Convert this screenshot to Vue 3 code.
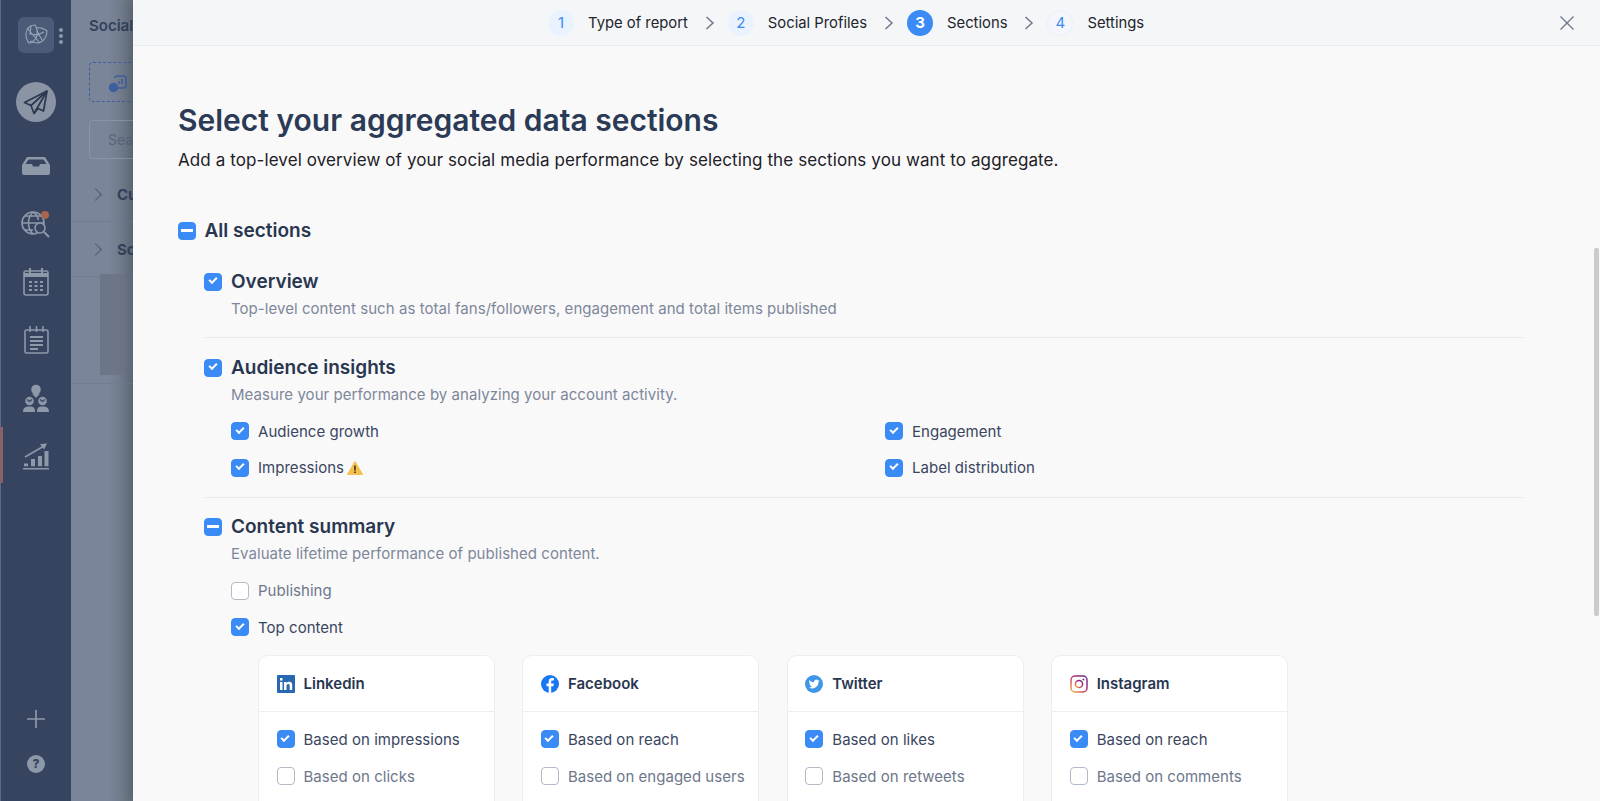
<script setup>
const steps = [
  { n: 1, label: 'Type of report', state: 'done' },
  { n: 2, label: 'Social Profiles', state: 'done' },
  { n: 3, label: 'Sections', state: 'active' },
  { n: 4, label: 'Settings', state: 'todo' }
]
const cards = [
  { name: 'Linkedin', icon: 'li', first: 'Based on impressions', second: 'Based on clicks' },
  { name: 'Facebook', icon: 'fb', first: 'Based on reach', second: 'Based on engaged users' },
  { name: 'Twitter', icon: 'tw', first: 'Based on likes', second: 'Based on retweets' },
  { name: 'Instagram', icon: 'ig', first: 'Based on reach', second: 'Based on comments' }
]
</script>

<template>
  <div class="page">
    <aside class="rail">
      <span class="accent"></span>
      <div class="logo-row">
        <div class="logo">
          <svg width="26" height="26" viewBox="0 0 26 26" fill="none" stroke="#9aa5b5" stroke-width="1.1">
            <path d="M3 12c0-5 4-9 9-9 2 3 3 8 1 13-2 3-5 5-7 5-2-2-3-5-3-9z" />
            <path d="M13 6c4-1 9 1 11 3 0 5-3 11-9 12-3 0-6-1-8-2" />
            <path d="M4 6l12 14M8 3l-1 9 9 1M14 9l5 9M21 10l-7 3" />
          </svg>
        </div>
        <div class="dots"><i></i><i></i><i></i></div>
      </div>
      <div class="send">
        <svg width="26" height="26" viewBox="0 0 26 26" fill="none" stroke="#2b3850" stroke-width="1.7" stroke-linejoin="round">
          <path d="M24 2 1.500 13.500 8 16.500 11 24.500 15 19.500 20.500 22z" />
          <path d="M24 2 8 16.500M24 2 11 24.500" />
        </svg>
      </div>
      <div class="nav-icon first">
        <svg width="28" height="18" viewBox="0 0 28 18" fill="#8d98a9">
          <path d="M5 0h18l5 8v8a2 2 0 0 1-2 2H2a2 2 0 0 1-2-2V8zM6.500 2.500 3.500 7H10l1 2.500h6L18 7h6.500l-3-4.500z" fill-rule="evenodd" />
        </svg>
      </div>
      <div class="nav-icon">
        <svg width="30" height="30" viewBox="0 0 30 30" fill="none" stroke="#8d98a9" stroke-width="1.600">
          <circle cx="12" cy="14" r="11" />
          <path d="M1 14h22M12 3c-6 6-6 16 0 22M12 3c3 2 5 5 5.500 8M4 7h16M4 21h8" />
          <circle cx="19" cy="19" r="5" fill="#364460" />
          <path d="M23 23l5 5" stroke-width="2" />
          <circle cx="24" cy="6" r="4" fill="#a8664f" stroke="none" />
        </svg>
      </div>
      <div class="nav-icon">
        <svg width="26" height="28" viewBox="0 0 26 28" fill="none" stroke="#8d98a9" stroke-width="1.600">
          <rect x="1" y="3" width="24" height="24" rx="2" />
          <path d="M1 7h24" stroke-width="4" />
          <path d="M7 0v6M19 0v6" stroke-width="2" />
          <path d="M6 14h3M11.500 14h3M17 14h3M6 18h3M11.500 18h3M17 18h3M6 22h3M11.500 22h3M17 22h3" stroke-width="2" />
        </svg>
      </div>
      <div class="nav-icon">
        <svg width="25" height="28" viewBox="0 0 25 28" fill="none" stroke="#8d98a9" stroke-width="1.600">
          <rect x="1" y="4" width="23" height="23" rx="1.500" />
          <path d="M6 0v6M12.500 0v6M19 0v6" />
          <path d="M6 11h13M6 15h13M6 19h13M6 23h8" stroke-width="1.800" />
        </svg>
      </div>
      <div class="nav-icon">
        <svg width="28" height="28" viewBox="0 0 28 28" fill="#8d98a9">
          <circle cx="14" cy="5.500" r="4.800" />
          <path d="M10 9.500h8L14 14z" />
          <circle cx="7.500" cy="17" r="4.300" />
          <circle cx="20.500" cy="17" r="4.300" />
          <path d="M5 15.500l2.500 2 2.500-2M18 15.500l2.500 2 2.500-2" stroke="#364460" stroke-width="1.200" fill="none" />
          <path d="M1 28c0-4 2-5.500 6.500-5.500S13 24 13 28zM15 28c0-4 1-5.500 5.500-5.500S27 24 27 28z" />
        </svg>
      </div>
      <div class="nav-icon">
        <svg width="28" height="27" viewBox="0 0 28 27" fill="#8d98a9">
          <path d="M1 25h26v1.500H1zM2 20.500h4v2.800H2zM9 16h4v7.300H9zM16 13h4v10.300h-4zM22.500 8h4v15.300h-4z" />
          <path d="M3 14 22 3" fill="none" stroke="#8d98a9" stroke-width="1.600" />
          <path d="M18 1 25 .5l-3 6z" />
        </svg>
      </div>
      <div class="rail-foot">
        <svg width="18" height="18" viewBox="0 0 18 18" stroke="#8d98a9" stroke-width="1.700"><path d="M9 0v18M0 9h18" /></svg>
        <span class="help">?</span>
      </div>
    </aside>

    <section class="back">
      <div class="back-title">Social</div>
      <div class="back-add">
        <svg class="add-icon" width="20" height="20" viewBox="0 0 20 20" fill="none" stroke="#3d5f9e" stroke-width="1.500">
          <path d="M7 4a2 2 0 0 1 2-2h7a2 2 0 0 1 2 2v8a2 2 0 0 1-2 2H9" />
          <path d="M11 10V7M14 10V5" />
          <circle cx="5.500" cy="13.500" r="4" fill="#3d5f9e" />
        </svg>
      </div>
      <div class="back-search">Sea</div>
      <div class="back-row"><span class="chev"></span><b>Cu</b></div>
      <div class="back-row"><span class="chev"></span><b>So</b></div>
      <div class="back-block"></div>
      <div class="back-line"></div>
    </section>

    <main class="modal">
      <header class="topbar">
        <ol class="steps">
          <li v-for="(s, i) in steps" :key="s.n" class="step">
            <span class="num" :class="s.state">{{ s.n }}</span>
            <span class="step-label">{{ s.label }}</span>
            <svg v-if="i < steps.length - 1" class="step-arrow" width="10" height="14" viewBox="0 0 10 14" fill="none" stroke="#6f7a8c" stroke-width="1.500"><path d="M1.500 1 8 7l-6.500 6" /></svg>
          </li>
        </ol>
        <svg class="close" width="14" height="14" viewBox="0 0 14 14" stroke="#6f7a8c" stroke-width="1.400"><path d="M.5.500l13 13M13.500.500l-13 13" /></svg>
      </header>

      <div class="scroll">
        <div class="content">
          <h1>Select your aggregated data sections</h1>
          <p class="lead">Add a top-level overview of your social media performance by selecting the sections you want to aggregate.</p>

          <label class="row all"><span class="box minus"></span><strong>All sections</strong></label>

          <div class="group">
            <section class="sec">
              <label class="row"><span class="box on"></span><strong class="h">Overview</strong></label>
              <p class="desc">Top-level content such as total fans/followers, engagement and total items published</p>
            </section>

            <section class="sec">
              <label class="row"><span class="box on"></span><strong class="h">Audience insights</strong></label>
              <p class="desc">Measure your performance by analyzing your account activity.</p>
              <div class="grid">
                <label class="opt"><span class="box on"></span>Audience growth</label>
                <label class="opt"><span class="box on"></span>Engagement</label>
                <label class="opt">
                  <span class="box on"></span>Impressions
                  <svg class="warn" width="16" height="14" viewBox="0 0 16 14"><path d="M8 .5 15.600 13.500H.4z" fill="#f6bf4f" stroke="#f6bf4f" stroke-linejoin="round" /><path d="M7.200 4.500h1.600v5H7.200zM7.200 10.500h1.600v1.600H7.200z" fill="#3a3420" /></svg>
                </label>
                <label class="opt"><span class="box on"></span>Label distribution</label>
              </div>
            </section>

            <section class="sec last">
              <label class="row"><span class="box minus"></span><strong class="h">Content summary</strong></label>
              <p class="desc">Evaluate lifetime performance of published content.</p>
              <div class="stack">
                <label class="opt muted"><span class="box"></span>Publishing</label>
                <label class="opt"><span class="box on"></span>Top content</label>
              </div>
              <div class="cards">
                <article v-for="c in cards" :key="c.name" class="card">
                  <header class="card-head">
                    <svg v-if="c.icon === 'li'" width="18" height="18" viewBox="0 0 18 18"><rect width="18" height="18" rx="1" fill="#2867b2" /><path d="M3 7h2.500v8H3zM3 3h2.500v2.500H3zM7 7h2.400v1.200C10 7.300 11 6.800 12.200 6.800c2.300 0 3 1.400 3 3.600V15h-2.500v-4c0-1.200-.3-2-1.400-2-1.200 0-1.800.8-1.800 2v4H7z" fill="#fff" /></svg>
                    <svg v-else-if="c.icon === 'fb'" width="18" height="18" viewBox="0 0 18 18"><circle cx="9" cy="9" r="9" fill="#1877f2" /><path d="M10.200 18v-6.800h2.200l.4-2.700h-2.600V6.900c0-.8.300-1.300 1.400-1.300h1.300V3.200c-.3 0-1-.1-1.900-.1-2 0-3.300 1.200-3.300 3.400v2H5.500v2.700h2.200V18z" fill="#fff" /></svg>
                    <svg v-else-if="c.icon === 'tw'" width="18" height="18" viewBox="0 0 18 18"><circle cx="9" cy="9" r="9" fill="#3f95e8" /><path d="M14.500 5.600c-.4.200-.8.300-1.300.4.500-.3.800-.7 1-1.200-.4.300-.9.500-1.400.6a2.200 2.200 0 0 0-3.800 2C7.200 7.300 5.600 6.500 4.500 5.100c-.6 1-.3 2.300.7 3-.4 0-.7-.1-1-.3 0 1.100.8 2 1.800 2.200-.3.100-.7.100-1 0 .3.900 1.100 1.500 2.100 1.500A4.500 4.500 0 0 1 3.800 12.400 6.300 6.300 0 0 0 13.500 7c.4-.3.800-.8 1-1.400z" fill="#fff" /></svg>
                    <svg v-else width="18" height="18" viewBox="0 0 18 18" fill="none">
                      <defs><linearGradient id="ig" x1="0" y1="1" x2="1" y2="0"><stop offset="0" stop-color="#f5b33c" /><stop offset=".5" stop-color="#c4346c" /><stop offset="1" stop-color="#5b2a8c" /></linearGradient></defs>
                      <rect x="1" y="1" width="16" height="16" rx="4" stroke="url(#ig)" stroke-width="1.500" />
                      <circle cx="9" cy="9" r="3.600" stroke="url(#ig)" stroke-width="1.500" />
                      <circle cx="13.400" cy="4.600" r="1" fill="#8a2d85" />
                    </svg>
                    <span>{{ c.name }}</span>
                  </header>
                  <div class="card-body">
                    <label class="opt"><span class="box on"></span>{{ c.first }}</label>
                    <label class="opt muted"><span class="box"></span>{{ c.second }}</label>
                  </div>
                </article>
              </div>
            </section>
          </div>
        </div>
        <div class="scrollbar"><div class="thumb"></div></div>
      </div>
    </main>
  </div>
</template>

<style>
html, body { margin: 0; height: 100%; overflow: hidden; background: #f9f9fa; }
</style>

<style scoped>
.page {
  display: flex;
  height: 801px;
  width: 1600px;
  overflow: hidden;
  font-family: Inter, "Noto Sans", sans-serif;
  color: #29364f;
}
.rail {
  width: 71px;
  flex: none;
  background: #364460;
  display: flex;
  flex-direction: column;
  align-items: center;
  box-sizing: border-box;
  padding-top: 17px;
  border-left: 1px solid #5c6a82;
  position: relative;
}
.accent {
  position: absolute;
  left: -1px;
  top: 427px;
  width: 3px;
  height: 56px;
  background: #856468;
}
.logo-row { position: relative; width: 36px; height: 36px; }
.logo {
  width: 36px;
  height: 36px;
  border-radius: 6px;
  background: #4c5c78;
  display: flex;
  align-items: center;
  justify-content: center;
}
.dots {
  position: absolute;
  left: 41px;
  top: 11px;
  display: flex;
  flex-direction: column;
  gap: 2px;
}
.dots i { width: 4px; height: 4px; border-radius: 50%; background: #8d98a9; }
.send {
  width: 40px;
  height: 40px;
  margin-top: 29px;
  border-radius: 50%;
  background: #8a94a5;
  display: flex;
  align-items: center;
  justify-content: center;
}
.nav-icon {
  width: 40px;
  height: 30px;
  margin-top: 28px;
  display: flex;
  align-items: center;
  justify-content: center;
}
.nav-icon.first { margin-top: 29px; }
.rail-foot {
  margin-top: auto;
  margin-bottom: 28px;
  display: flex;
  flex-direction: column;
  align-items: center;
  gap: 27px;
}
.help {
  width: 18px;
  height: 18px;
  border-radius: 50%;
  background: #8d98a9;
  color: #364460;
  font-size: 12px;
  font-weight: 800;
  line-height: 18px;
  text-align: center;
}
.back {
  width: 62px;
  flex: none;
  background: linear-gradient(90deg, #7a8599 0, #7a8599 60%, #69727f 100%);
  overflow: hidden;
  box-sizing: border-box;
  padding-top: 16px;
  position: relative;
}
.back-title { margin-left: 18px; font-size: 15px; font-weight: 600; color: #33415c; line-height: 20px; white-space: nowrap; }
.back-add {
  margin: 26px 0 0 18px;
  width: 80px;
  height: 40px;
  border: 1px dashed #3d5f9e;
  border-radius: 4px;
  display: flex;
  align-items: center;
  padding-left: 18px;
  box-sizing: border-box;
}
.add-icon { flex: none; margin-top: 4px; }
.back-search {
  margin: 18px 0 0 18px;
  width: 80px;
  height: 39px;
  border: 1px solid #8a94a6;
  border-radius: 4px;
  box-sizing: border-box;
  padding: 10px 0 0 18px;
  font-size: 14px;
  color: #5a6679;
  white-space: nowrap;
}
.back-row {
  height: 54px;
  display: flex;
  align-items: center;
  padding-left: 20px;
  border-bottom: 1px solid #717c90;
  font-size: 15px;
  color: #33415c;
  white-space: nowrap;
}
.back-search + .back-row { margin-top: 8px; }
.chev {
  flex: none;
  width: 8px;
  height: 8px;
  border-top: 1.500px solid #4e5a70;
  border-right: 1.500px solid #4e5a70;
  transform: rotate(45deg);
  margin-right: 17px;
}
.back-block {
  position: absolute;
  left: 29px;
  top: 274px;
  width: 40px;
  height: 101px;
  background: #6c7686;
}
.back-line { position: absolute; left: 0; right: 0; top: 383px; height: 1px; background: #717c90; }
.modal {
  flex: 1;
  min-width: 0;
  display: flex;
  flex-direction: column;
  background: #f9f9fa;
  box-shadow: -4px 0 10px rgba(40, 48, 64, .25);
  position: relative;
}
.topbar {
  height: 46px;
  flex: none;
  background: #f4f6f8;
  border-bottom: 1px solid #eaecf0;
  box-sizing: border-box;
  position: relative;
  display: flex;
  align-items: center;
  padding-left: 415px;
}
.steps { display: flex; margin: 0; padding: 0; list-style: none; align-items: center; }
.step { display: flex; align-items: center; }
.num {
  width: 26px;
  height: 26px;
  border-radius: 50%;
  display: flex;
  align-items: center;
  justify-content: center;
  font-size: 15px;
  color: #3a8bf5;
  background: #e9f2fd;
}
.num.active { background: #3a8bf5; color: #fff; font-weight: 700; }
.num.todo { background: #f3f7fc; box-shadow: inset 0 0 0 1px #e9f0f8; }
.step-label { margin-left: 14px; font-size: 14.800px; color: #22252c; white-space: nowrap; }
.step-arrow { margin: 0 13px 0 17px; }
.close { position: absolute; right: 26px; top: 16px; }
.scroll { flex: 1; min-height: 0; overflow: hidden; position: relative; }
.content { padding: 54px 77px 0 45px; }
h1 { margin: 0; font-size: 30px; line-height: 40px; font-weight: 600; color: #2b3a55; }
.lead { margin: 8px 0 0; font-size: 17px; letter-spacing: .1px; line-height: 24px; color: #1d2026; }
.row { display: flex; align-items: center; gap: 9px; }
.box {
  width: 18px;
  height: 18px;
  flex: none;
  box-sizing: border-box;
  border: 1.500px solid #b3bac8;
  border-radius: 4px;
  background: #fff;
  position: relative;
}
.box.on, .box.minus { background: #3a8bf5; border-color: #3a8bf5; }
.box.on::after {
  content: "";
  position: absolute;
  left: 3.500px;
  top: 3.500px;
  width: 6px;
  height: 3px;
  border-left: 2px solid #fff;
  border-bottom: 2px solid #fff;
  transform: rotate(-45deg);
}
.box.minus::after {
  content: "";
  position: absolute;
  left: 1.500px;
  top: 6px;
  width: 12px;
  height: 3px;
  background: #fff;
}
.all { margin-top: 44.500px; height: 28px; font-size: 19px; gap: 8.500px; color: #29364f; }
.all strong { font-weight: 600; }
.group { margin: 24px 0 0 26px; }
.sec { padding-bottom: 16.500px; border-bottom: 1px solid #e8eaef; margin-bottom: 16.500px; }
.sec + .sec { padding-bottom: 17px; margin-bottom: 16px; }
.sec.last { border: 0; margin: 0; padding: 0; }
.h { font-size: 19px; font-weight: 600; line-height: 26px; color: #29364f; }
.desc { margin: 2px 0 0 27px; font-size: 15px; letter-spacing: .05px; line-height: 24px; color: #7d8799; }
.sec.last .desc { margin-top: 2.500px; }
.grid {
  display: grid;
  grid-template-columns: 654px 1fr;
  row-gap: 12.500px;
  margin: 12.500px 0 0 27px;
}
.stack { display: flex; flex-direction: column; gap: 12.500px; margin: 12.500px 0 0 27px; }
.opt {
  display: flex;
  align-items: center;
  gap: 9px;
  height: 24px;
  font-size: 15px;
  letter-spacing: .03px;
  color: #3a4660;
  white-space: nowrap;
}
.muted { color: #6d778b; }
.warn { margin-left: -6px; }
.cards { display: flex; gap: 27.400px; margin: 16px 0 0 54px; }
.card {
  width: 237px;
  box-sizing: border-box;
  background: #fff;
  border: 1px solid #eceef2;
  border-radius: 10px;
  height: 220px;
  flex: none;
}
.card-head {
  height: 56px;
  box-sizing: border-box;
  border-bottom: 1px solid #eceef2;
  display: flex;
  align-items: center;
  gap: 9px;
  padding-left: 17.500px;
  font-size: 15px;
  font-weight: 600;
  color: #29364f;
}
.card-body { padding: 15px 0 0 17.500px; display: flex; flex-direction: column; gap: 13px; }
.scrollbar { position: absolute; right: 0; top: 0; bottom: 0; width: 6px; }
.thumb { position: absolute; right: 1px; top: 202px; width: 5px; height: 368px; background: #c9cbcf; border-radius: 2px; }
</style>
